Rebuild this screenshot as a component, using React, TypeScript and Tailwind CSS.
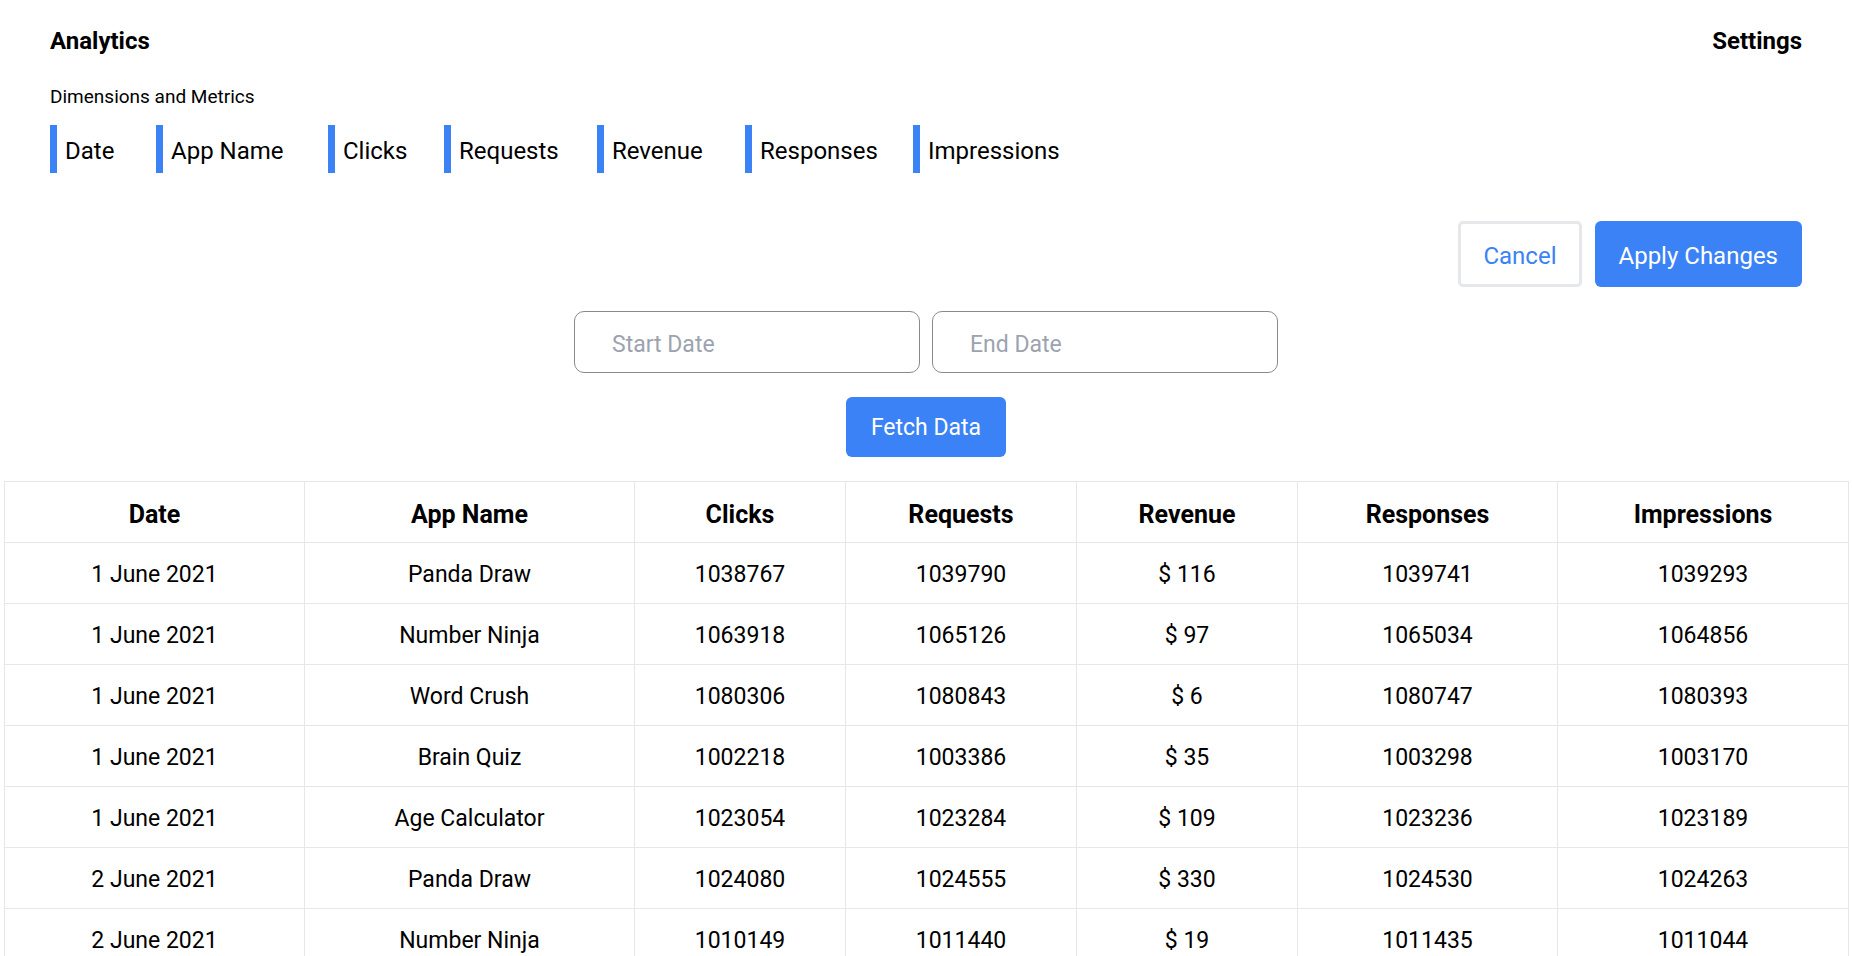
import React from 'react';

const metrics = ['Date', 'App Name', 'Clicks', 'Requests', 'Revenue', 'Responses', 'Impressions'];

// chip widths so the blue bars line up with the design
const chipWidths = ['w-[106px]', 'w-[172px]', 'w-[116px]', 'w-[153px]', 'w-[148px]', 'w-[168px]', 'w-auto'];

const colWidths = ['w-[300px]', 'w-[330px]', 'w-[211px]', 'w-[231px]', 'w-[221px]', 'w-[260px]', 'w-[291px]'];

const rows = [
  ['1 June 2021', 'Panda Draw', '1038767', '1039790', '$ 116', '1039741', '1039293'],
  ['1 June 2021', 'Number Ninja', '1063918', '1065126', '$ 97', '1065034', '1064856'],
  ['1 June 2021', 'Word Crush', '1080306', '1080843', '$ 6', '1080747', '1080393'],
  ['1 June 2021', 'Brain Quiz', '1002218', '1003386', '$ 35', '1003298', '1003170'],
  ['1 June 2021', 'Age Calculator', '1023054', '1023284', '$ 109', '1023236', '1023189'],
  ['2 June 2021', 'Panda Draw', '1024080', '1024555', '$ 330', '1024530', '1024263'],
  ['2 June 2021', 'Number Ninja', '1010149', '1011440', '$ 19', '1011435', '1011044'],
  ['2 June 2021', 'Word Crush', '1040412', '1041087', '$ 52', '1040996', '1040718'],
  ['2 June 2021', 'Brain Quiz', '1057321', '1058004', '$ 74', '1057930', '1057615'],
];

export default function App() {
  return (
    <div className="min-h-screen bg-white text-black font-['Roboto',sans-serif]">
      <div className="px-[50px] pt-[27px]">
        <div className="flex items-center justify-between">
          <h1 className="text-[24px] leading-[28px] font-bold">Analytics</h1>
          <span className="text-[24px] leading-[28px] font-bold">Settings</span>
        </div>
        <p className="mt-[30px] text-[19px] leading-[24px]">Dimensions and Metrics</p>
        <div className="mt-[16px] flex">
          {metrics.map((m, i) => (
            <div
              key={m}
              className={`${chipWidths[i]} flex h-[48px] shrink-0 items-center border-l-[7px] border-[#3b82f6] pl-2 pt-[4px] text-[24px]`}
            >
              {m}
            </div>
          ))}
        </div>
        <div className="mt-[48px] flex justify-end gap-[13px]">
          <button className="h-[66px] rounded-[5px] border-[3px] border-[#e5e7eb] bg-white px-[22px] pt-[3px] text-[24px] text-[#3b82f6]">
            Cancel
          </button>
          <button className="h-[66px] rounded-[6px] bg-[#3b82f6] px-[24px] pt-[3px] text-[24px] text-white">
            Apply Changes
          </button>
        </div>
      </div>

      <div className="mt-[24px] flex justify-center gap-[12px]">
        <input
          placeholder="Start Date"
          className="h-[62px] w-[346px] rounded-[10px] border border-[#8a8a8a] pl-[37px] pt-[4px] text-[23px] outline-none placeholder:text-[#9ca3af]"
        />
        <input
          placeholder="End Date"
          className="h-[62px] w-[346px] rounded-[10px] border border-[#8a8a8a] pl-[37px] pt-[4px] text-[23px] outline-none placeholder:text-[#9ca3af]"
        />
      </div>
      <div className="mt-[24px] flex justify-center">
        <button className="h-[60px] rounded-[6px] bg-[#3b82f6] px-[25px] pt-[3px] text-[23px] text-white">
          Fetch Data
        </button>
      </div>

      <div className="mt-[24px] px-1">
        <table className="w-[1844px] table-fixed border-collapse border border-[#e5e7eb]">
          <thead>
            <tr>
              {metrics.map((m, i) => (
                <th key={m} className={`${colWidths[i]} h-[61px] border border-[#e5e7eb] pt-[5px] text-center text-[25px] font-bold`}>
                  {m}
                </th>
              ))}
            </tr>
          </thead>
          <tbody>
            {rows.map((r, ri) => (
              <tr key={ri}>
                {r.map((c, ci) => (
                  <td key={ci} className="h-[61px] border border-[#e5e7eb] pt-[5px] text-center text-[23px]">
                    {c}
                  </td>
                ))}
              </tr>
            ))}
          </tbody>
        </table>
      </div>
    </div>
  );
}
